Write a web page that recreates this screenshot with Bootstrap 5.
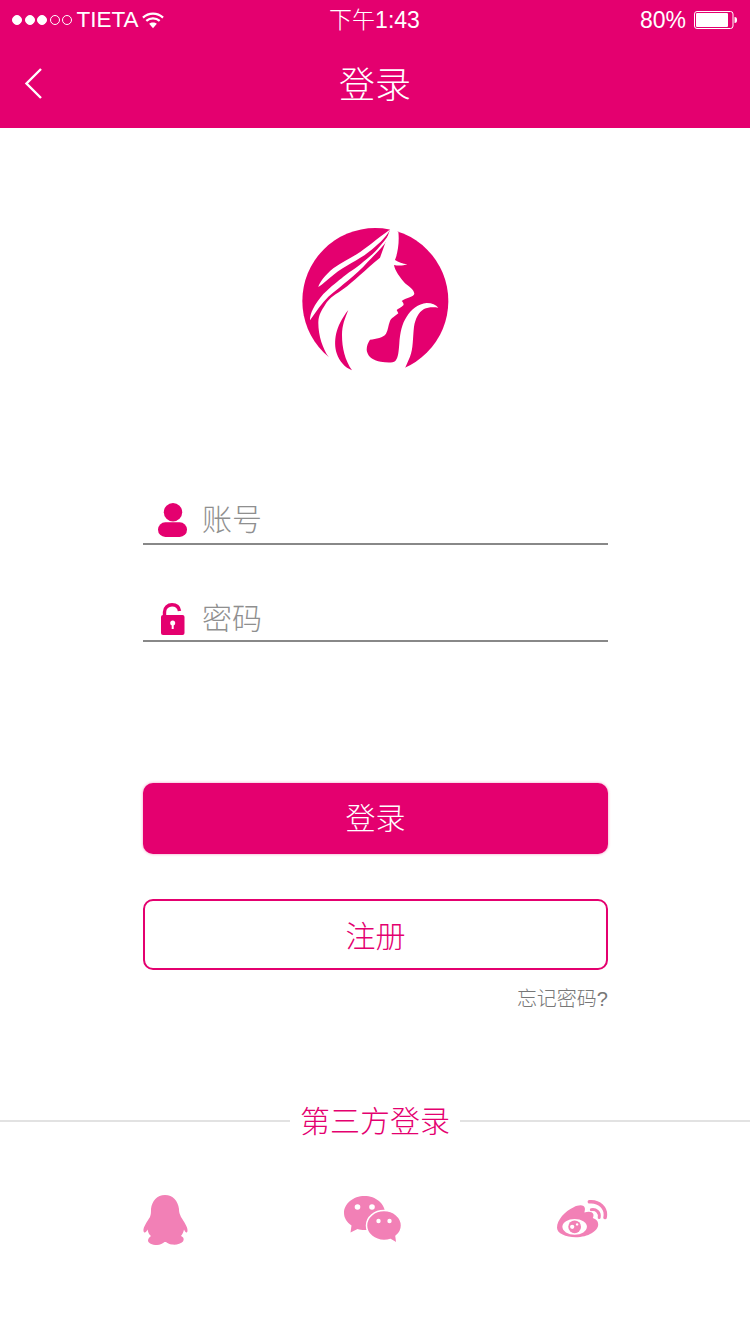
<!DOCTYPE html>
<html lang="zh-CN">
<head>
  <meta charset="utf-8">
  <title>登录</title>
  <link href="https://cdn.jsdelivr.net/npm/bootstrap@5.3.0/dist/css/bootstrap.min.css" rel="stylesheet">
  <style>
    body {
      font-family: "Liberation Sans", "Noto Sans CJK SC", sans-serif;
      font-weight: 300;
      background: #fff;
      width: 750px;
      height: 1334px;
      overflow: hidden;
    }

    .top-area {
      background: #e4006f;
      color: #fff;
      height: 128px;
    }

    .status-row {
      height: 40px;
      padding: 0 13px 0 12px;
      font-size: 23px;
      line-height: 1;
    }

    .status-side {
      width: 200px;
    }

    .sig-dot {
      width: 10px;
      height: 10px;
      border-radius: 50%;
      border: 1px solid #fff;
      margin-right: 2.5px;
      flex: none;
    }

    .sig-dot.on {
      background: #fff;
    }

    .carrier-name {
      margin-left: 2px;
      font-size: 22.5px;
    }

    .wifi-svg {
      margin-left: 3px;
    }

    .title-row {
      height: 88px;
      padding-top: 3px;
      font-size: 36px;
    }

    .back-icon {
      left: 24px;
      top: 27px;
    }

    .logo-svg {
      display: block;
      margin: 87px auto 0;
      filter: blur(.4px);
    }

    .form-area {
      width: 465px;
      margin-left: 143px;
    }

    .field-row {
      height: 44px;
      border-bottom: 2px solid #888;
      color: #8f8f8f;
      font-size: 30px;
    }

    .field-row.first {
      margin-top: 116px;
    }

    .field-row.first span {
      margin-bottom: 6px;
    }

    .field-row.second {
      margin-top: 53px;
    }

    .field-row.second span {
      margin-bottom: 2px;
    }

    .field-icon {
      width: 59px;
      padding-left: 15px;
      flex: none;
    }

    .lock-svg {
      margin-left: 3px;
    }

    .btn-login,
    .btn-reg {
      display: block;
      width: 100%;
      height: 71px;
      border-radius: 10px;
      font-size: 30px;
      font-weight: 300;
      line-height: 1;
      padding: 0;
    }

    .btn-login {
      margin-top: 141px;
      background: #e4006f;
      border: 0;
      color: #fff;
      box-shadow: 0 0 3px rgba(228, 0, 111, .45);
    }

    .btn-reg {
      margin-top: 45px;
      padding-top: 4px;
      background: #fff;
      border: 2px solid #e4006f;
      color: #e4006f;
    }

    .forgot-link {
      margin-top: 17px;
      font-size: 20px;
      line-height: 24px;
      color: #777;
    }

    .third-head {
      margin-top: 90px;
      height: 40px;
      color: #e4006f;
      font-size: 30px;
      line-height: 40px;
    }

    .third-line {
      flex: 1;
      height: 2px;
      background: #e2e2e2;
    }

    .third-head span {
      padding: 2px 10px 0;
    }

    .third-icons {
      margin-top: 54px;
      height: 50px;
    }
  </style>
</head>
<body>
  <div class="top-area">
    <div class="status-row d-flex align-items-center justify-content-between">
      <div class="status-side d-flex align-items-center">
        <span class="sig-dot on"></span>
        <span class="sig-dot on"></span>
        <span class="sig-dot on"></span>
        <span class="sig-dot"></span>
        <span class="sig-dot"></span>
        <span class="carrier-name">TIETA</span>
        <svg class="wifi-svg" width="22" height="18" viewBox="0 0 23 18" fill="none" stroke="#fff" stroke-width="2.4">
          <path d="M1 6.5C7 1 16 1 22 6.5"/>
          <path d="M4.5 10C8.5 6.5 14.5 6.5 18.5 10"/>
          <path d="M11.5 17.5L7.5 13C9.5 11 13.5 11 15.5 13Z" fill="#fff" stroke="none"/>
        </svg>
      </div>
      <div>下午1:43</div>
      <div class="status-side d-flex align-items-center justify-content-end">
        <span>80%</span>
        <svg class="ms-2" width="43" height="18" viewBox="0 0 43 18">
          <rect x=".5" y=".5" width="38.500" height="17" rx="2.500" fill="none" stroke="#fff"/>
          <rect x="2" y="2" width="32" height="14" rx="1" fill="#fff"/>
          <path d="M40.500 6c2 0 2.500 1.200 2.500 3s-.5 3-2.500 3z" fill="#fff"/>
        </svg>
      </div>
    </div>
    <div class="title-row position-relative d-flex align-items-center justify-content-center">
      <svg class="back-icon position-absolute" width="20" height="34" viewBox="0 0 20 34" fill="none" stroke="#fff" stroke-width="2.400">
        <path d="M17 2L2.500 16.500L17 31"/>
      </svg>
      <span>登录</span>
    </div>
  </div>

  <svg class="logo-svg" width="170" height="170" viewBox="0 0 510 510">
    <circle cx="256" cy="258" r="219" fill="#e4006f"/>
    <path fill="#fff" d="M302 38L325 50C328 75 325 110 315 135C325 142 338 146 352 148C338 153 322 152 312 150C314 165 330 188 345 205C358 216 372 224 373 236C372 246 350 246 335 258C340 262 342 268 340 271C334 278 324 281 320 285L325 295C315 304 303 310 300 318C294 332 295 345 288 356C280 368 258 372 240 374C233 384 228 398 231 410C236 428 252 436 272 440C290 443 308 444 316 438C325 428 326 410 328 385C330 355 336 325 350 305C362 285 385 266 410 264C426 264 438 270 445 278C430 276 414 276 402 282C385 292 376 312 372 335C368 370 370 400 360 425L345 460L350 500H130L115 425C98 400 84 360 85 320C86 300 95 285 105 270C120 245 140 237 160 222C190 200 225 165 270 128Z"/>
    <path fill="#e4006f" d="M175 285C165 310 156 330 156 360C156 400 165 435 186 466C165 458 148 440 140 415C130 380 135 335 175 285Z"/>
    <path fill="#fff" d="M85 216C88 204 105 180 130 160C155 142 178 132 200 118C228 100 258 74 302 42C285 72 262 90 235 112C205 136 165 152 130 180C112 194 98 208 85 216Z"/>
    <path fill="#fff" d="M60 316C60 295 72 270 100 237C125 212 145 198 160 185C185 165 205 155 220 140C240 125 265 105 303 50C292 85 270 102 220 155C200 175 180 192 160 208C145 222 130 232 115 245C95 265 78 290 60 316Z"/>
    <path d="M0 472H510V510H0Z" fill="#fff"/>
  </svg>

  <div class="form-area">
    <div class="field-row first d-flex align-items-center">
      <div class="field-icon">
        <svg class="d-block mb-1" width="30" height="34" viewBox="0 0 30 34" fill="#e4006f">
          <circle cx="15" cy="9.200" r="9.200"/>
          <rect x="0" y="19.300" width="29" height="14.700" rx="7.300"/>
        </svg>
      </div>
      <span>账号</span>
    </div>
    <div class="field-row second d-flex align-items-center">
      <div class="field-icon">
        <svg class="d-block lock-svg" width="24" height="33" viewBox="0 0 24 33">
          <path d="M3.500 12V9C3.500 4.500 7 1.700 11 1.700C15 1.700 18 4 18.500 8" fill="none" stroke="#e4006f" stroke-width="3.400"/>
          <rect x="0" y="12" width="23.500" height="20" rx="2" fill="#e4006f"/>
          <circle cx="11.700" cy="20" r="2.500" fill="#fff"/>
          <rect x="10.700" y="20" width="2" height="6" fill="#fff"/>
        </svg>
      </div>
      <span>密码</span>
    </div>

    <button type="button" class="btn btn-login">登录</button>
    <button type="button" class="btn btn-reg">注册</button>
    <div class="forgot-link text-end">忘记密码?</div>
  </div>

  <div class="third-head d-flex align-items-center">
    <div class="third-line"></div>
    <span>第三方登录</span>
    <div class="third-line"></div>
  </div>

  <div class="form-area third-icons d-flex align-items-center justify-content-between">
    <svg width="45" height="50" viewBox="0 0 45 50" fill="#f280b6">
      <path d="M22 0C30 0 35 6 36 14C36 18 37 19 38 22C41 27 45 32 44.500 36C44 38.500 42.500 38 41 34.500C40.500 37 39.500 39 38 41C40.500 42 41.500 44 40 46.500C38 49 33 50 29 49.500C26.500 49.300 24 48 23 47H21.500C20 48.500 17 49.800 14 50C9 50 5 48 5 45.500C5 43 7 42 8 41C6 39.500 5 37 4.500 34.500C3 38 1 38.500 .5 36C0 32 4 27 7 22C8 19 8 18 8 14C9 6 14 0 22 0Z"/>
    </svg>
    <svg width="58" height="48" viewBox="0 0 58 48">
      <path fill="#f280b6" d="M20.500 0C31.800 0 41 7.600 41 17C41 26.400 31.800 34 20.500 34C18 34 15.500 33.600 13.500 33L6.500 36.500L7.500 29.500C3 26.500 0 22 0 17C0 7.600 9.200 0 20.500 0Z"/>
      <path fill="#f280b6" stroke="#fff" stroke-width="1.500" d="M40 14.500C49.400 14.500 57.500 21 57.500 29.500C57.500 34 55.500 37.500 52 40L53 47.500L46.500 43.500C44.500 44.200 42.300 44.500 40 44.500C30.600 44.500 22.500 38 22.500 29.500C22.500 21 30.600 14.500 40 14.500Z"/>
      <circle cx="13.500" cy="11" r="2.800" fill="#fff"/>
      <circle cx="28" cy="11" r="2.800" fill="#fff"/>
      <circle cx="34.500" cy="25" r="2.200" fill="#fff"/>
      <circle cx="45.500" cy="25" r="2.200" fill="#fff"/>
    </svg>
    <svg class="mb-1" width="51" height="39" viewBox="0 0 52 39">
      <path fill="#f280b6" d="M0 29C0 21 8 12 17 8C22 5.500 28 5 28.500 9.500C28.500 11 28 12.500 28 13.500C32 12 36 12.500 37 15C37.500 16.500 37 18 36.500 19C39.500 20 42 22 42 25.500C42 32 32 38.500 19 38.500C9 38.500 0 35 0 29Z"/>
      <ellipse cx="18" cy="28" rx="12.500" ry="8" fill="#fff"/>
      <circle cx="18" cy="28" r="6.500" fill="#f280b6"/>
      <circle cx="15.500" cy="28" r="2.200" fill="#fff"/>
      <circle cx="20.500" cy="25.500" r="1.200" fill="#fff"/>
      <path d="M33 2.500C43 1.500 51 9 49 18.500" fill="none" stroke="#f280b6" stroke-width="3.600" stroke-linecap="round"/>
      <path d="M35 10.500C40 9.500 44 13.500 43 18.500" fill="none" stroke="#f280b6" stroke-width="3" stroke-linecap="round"/>
    </svg>
  </div>

  <script src="https://cdn.jsdelivr.net/npm/bootstrap@5.3.0/dist/js/bootstrap.bundle.min.js"></script>
</body>
</html>
